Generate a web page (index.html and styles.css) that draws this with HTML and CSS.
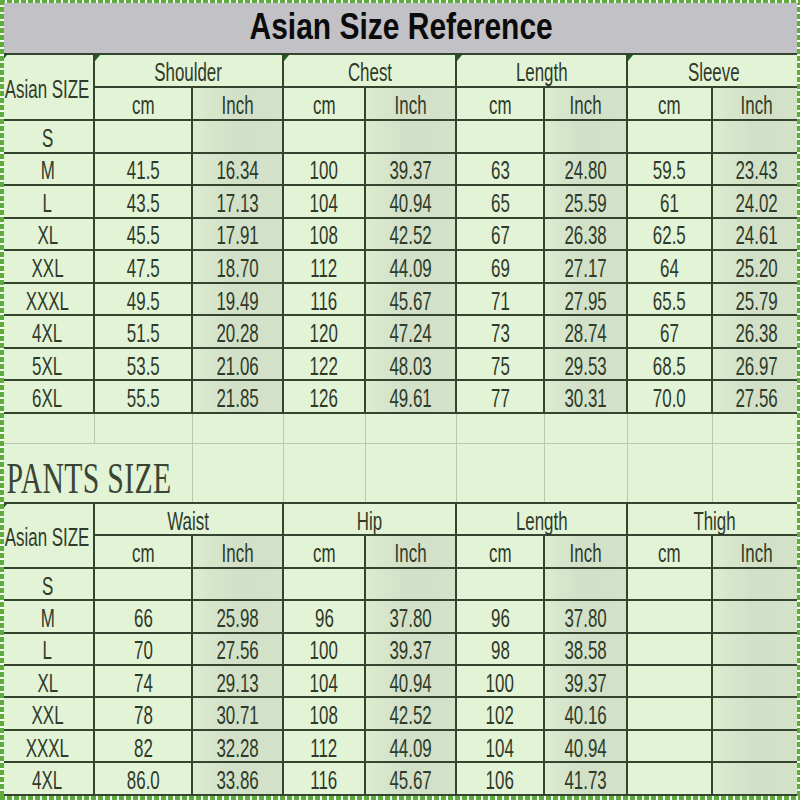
FILE: index.html
```html
<!DOCTYPE html>
<html>
<head>
<meta charset="utf-8">
<link rel="stylesheet" href="styles.css">
</head>
<body>
<div class="frame">
<table class="sheet">
<colgroup>
<col class="c1"><col class="c2"><col class="c3"><col class="c4"><col class="c5"><col class="c6"><col class="c7"><col class="c8"><col class="c9">
</colgroup>
<tbody>
<tr class="r-title"><td colspan="9" class="title"><span>Asian Size Reference</span></td></tr>
<tr class="r-h"><td rowspan="2" class="tri"><span>Asian SIZE</span></td><td colspan="2" class="tri"><span>Shoulder</span></td><td colspan="2" class="tri"><span>Chest</span></td><td colspan="2" class="tri"><span>Length</span></td><td colspan="2" class="tri"><span>Sleeve</span></td></tr>
<tr class="r-h"><td><span>cm</span></td><td class="in"><span>Inch</span></td><td><span>cm</span></td><td class="in"><span>Inch</span></td><td><span>cm</span></td><td class="in"><span>Inch</span></td><td><span>cm</span></td><td class="in"><span>Inch</span></td></tr>
<tr class="r-d"><td><span>S</span></td><td></td><td class="in"></td><td></td><td class="in"></td><td></td><td class="in"></td><td></td><td class="in"></td></tr>
<tr class="r-d"><td><span>M</span></td><td><span>41.5</span></td><td class="in"><span>16.34</span></td><td><span>100</span></td><td class="in"><span>39.37</span></td><td><span>63</span></td><td class="in"><span>24.80</span></td><td><span>59.5</span></td><td class="in"><span>23.43</span></td></tr>
<tr class="r-d"><td><span>L</span></td><td><span>43.5</span></td><td class="in"><span>17.13</span></td><td><span>104</span></td><td class="in"><span>40.94</span></td><td><span>65</span></td><td class="in"><span>25.59</span></td><td><span>61</span></td><td class="in"><span>24.02</span></td></tr>
<tr class="r-d"><td><span>XL</span></td><td><span>45.5</span></td><td class="in"><span>17.91</span></td><td><span>108</span></td><td class="in"><span>42.52</span></td><td><span>67</span></td><td class="in"><span>26.38</span></td><td><span>62.5</span></td><td class="in"><span>24.61</span></td></tr>
<tr class="r-d"><td><span>XXL</span></td><td><span>47.5</span></td><td class="in"><span>18.70</span></td><td><span>112</span></td><td class="in"><span>44.09</span></td><td><span>69</span></td><td class="in"><span>27.17</span></td><td><span>64</span></td><td class="in"><span>25.20</span></td></tr>
<tr class="r-d"><td><span>XXXL</span></td><td><span>49.5</span></td><td class="in"><span>19.49</span></td><td><span>116</span></td><td class="in"><span>45.67</span></td><td><span>71</span></td><td class="in"><span>27.95</span></td><td><span>65.5</span></td><td class="in"><span>25.79</span></td></tr>
<tr class="r-d"><td><span>4XL</span></td><td><span>51.5</span></td><td class="in"><span>20.28</span></td><td><span>120</span></td><td class="in"><span>47.24</span></td><td><span>73</span></td><td class="in"><span>28.74</span></td><td><span>67</span></td><td class="in"><span>26.38</span></td></tr>
<tr class="r-d"><td><span>5XL</span></td><td><span>53.5</span></td><td class="in"><span>21.06</span></td><td><span>122</span></td><td class="in"><span>48.03</span></td><td><span>75</span></td><td class="in"><span>29.53</span></td><td><span>68.5</span></td><td class="in"><span>26.97</span></td></tr>
<tr class="r-d"><td><span>6XL</span></td><td><span>55.5</span></td><td class="in"><span>21.85</span></td><td><span>126</span></td><td class="in"><span>49.61</span></td><td><span>77</span></td><td class="in"><span>30.31</span></td><td><span>70.0</span></td><td class="in"><span>27.56</span></td></tr>
<tr class="r-gap"><td class="g"></td><td class="g"></td><td class="g"></td><td class="g"></td><td class="g"></td><td class="g"></td><td class="g"></td><td class="g"></td><td class="g"></td></tr>
<tr class="r-pants"><td colspan="2" class="g pants"><span>PANTS SIZE</span></td><td class="g"></td><td class="g"></td><td class="g"></td><td class="g"></td><td class="g"></td><td class="g"></td><td class="g"></td></tr>
<tr class="r-h2"><td rowspan="2" class="tri"><span>Asian SIZE</span></td><td colspan="2"><span>Waist</span></td><td colspan="2"><span>Hip</span></td><td colspan="2"><span>Length</span></td><td colspan="2"><span>Thigh</span></td></tr>
<tr class="r-h2"><td><span>cm</span></td><td class="in"><span>Inch</span></td><td><span>cm</span></td><td class="in"><span>Inch</span></td><td><span>cm</span></td><td class="in"><span>Inch</span></td><td><span>cm</span></td><td class="in"><span>Inch</span></td></tr>
<tr class="r-p"><td><span>S</span></td><td></td><td class="in"></td><td></td><td class="in"></td><td></td><td class="in"></td><td></td><td class="in"></td></tr>
<tr class="r-p"><td><span>M</span></td><td><span>66</span></td><td class="in"><span>25.98</span></td><td><span>96</span></td><td class="in"><span>37.80</span></td><td><span>96</span></td><td class="in"><span>37.80</span></td><td></td><td class="in"></td></tr>
<tr class="r-p"><td><span>L</span></td><td><span>70</span></td><td class="in"><span>27.56</span></td><td><span>100</span></td><td class="in"><span>39.37</span></td><td><span>98</span></td><td class="in"><span>38.58</span></td><td></td><td class="in"></td></tr>
<tr class="r-p"><td><span>XL</span></td><td><span>74</span></td><td class="in"><span>29.13</span></td><td><span>104</span></td><td class="in"><span>40.94</span></td><td><span>100</span></td><td class="in"><span>39.37</span></td><td></td><td class="in"></td></tr>
<tr class="r-p"><td><span>XXL</span></td><td><span>78</span></td><td class="in"><span>30.71</span></td><td><span>108</span></td><td class="in"><span>42.52</span></td><td><span>102</span></td><td class="in"><span>40.16</span></td><td></td><td class="in"></td></tr>
<tr class="r-p"><td><span>XXXL</span></td><td><span>82</span></td><td class="in"><span>32.28</span></td><td><span>112</span></td><td class="in"><span>44.09</span></td><td><span>104</span></td><td class="in"><span>40.94</span></td><td></td><td class="in"></td></tr>
<tr class="r-p"><td><span>4XL</span></td><td><span>86.0</span></td><td class="in"><span>33.86</span></td><td><span>116</span></td><td class="in"><span>45.67</span></td><td><span>106</span></td><td class="in"><span>41.73</span></td><td></td><td class="in"></td></tr>
</tbody>
</table>
</div>
</body>
</html>
```
FILE: styles.css
```css
html, body {
  margin: 0;
  padding: 0;
  background: #e3f3d6;
}

.frame {
  position: relative;
  width: 800px;
  height: 800px;
  overflow: hidden;
  background: #e3f3d6;
}

.frame::after {
  content: "";
  position: absolute;
  inset: 0;
  pointer-events: none;
  background:
    repeating-linear-gradient(90deg, #5dac3d 0 5px, #f4fbef 5px 7px) top / 100% 3px no-repeat,
    repeating-linear-gradient(90deg, #5dac3d 0 5px, #f4fbef 5px 7px) bottom / 100% 4px no-repeat,
    repeating-linear-gradient(180deg, #5dac3d 0 5px, #f4fbef 5px 7px) left / 4px 100% no-repeat,
    repeating-linear-gradient(180deg, #5dac3d 0 5px, #f4fbef 5px 7px) right / 3px 100% no-repeat;
}

.sheet {
  border-collapse: collapse;
  table-layout: fixed;
  width: 800px;
  font-family: "Liberation Sans", Arial, sans-serif;
  color: #2f3a2a;
}

.c1 { width: 93px; }
.c2 { width: 98px; }
.c3 { width: 91px; }
.c4 { width: 82px; }
.c5 { width: 91px; }
.c6 { width: 88px; }
.c7 { width: 83px; }
.c8 { width: 85px; }
.c9 { width: 89px; }

.sheet td {
  border: 2px solid #35442e;
  padding: 0;
  text-align: center;
  vertical-align: middle;
  font-size: 26px;
  line-height: 1;
  overflow: visible;
  white-space: nowrap;
  position: relative;
}

.sheet td > span {
  display: inline-block;
  transform: scaleX(0.65);
  padding-top: 3px;
  margin: 0 -60px;
}

.sheet td.in {
  background: linear-gradient(90deg, #dceccf 0%, #d1e0c7 45%, #d3e2c9 100%);
}

.r-title td { height: 53px; }
.r-h td { height: 31px; }
.r-d td { height: 30.55px; }
.r-gap td { height: 29px; }
.r-pants td { height: 58px; }
.r-h2 td { height: 30.5px; }
.r-p td { height: 30.4px; }

.sheet td.title {
  background: #c2c1c5;
  color: #0b0b0b;
  font-weight: bold;
  font-size: 37px;
  border-top: 0;
}

.sheet td.title > span {
  transform: scaleX(0.81);
  padding-top: 0;
}

.sheet td.g {
  border: 1px solid #b9c8b1;
  background: #e3f3d6;
}

.sheet td.pants {
  text-align: left;
  font-family: "Liberation Serif", "Times New Roman", serif;
  font-size: 45px;
  color: #3a4534;
}

.sheet td.pants > span {
  transform: scaleX(0.66);
  transform-origin: left center;
  margin: 0;
  padding-left: 7px;
  padding-top: 12px;
  letter-spacing: 0.5px;
}

.sheet td.tri::before {
  content: "";
  position: absolute;
  left: 0;
  top: 0;
  border-top: 6px solid #1f5a1a;
  border-right: 5px solid transparent;
}
```
